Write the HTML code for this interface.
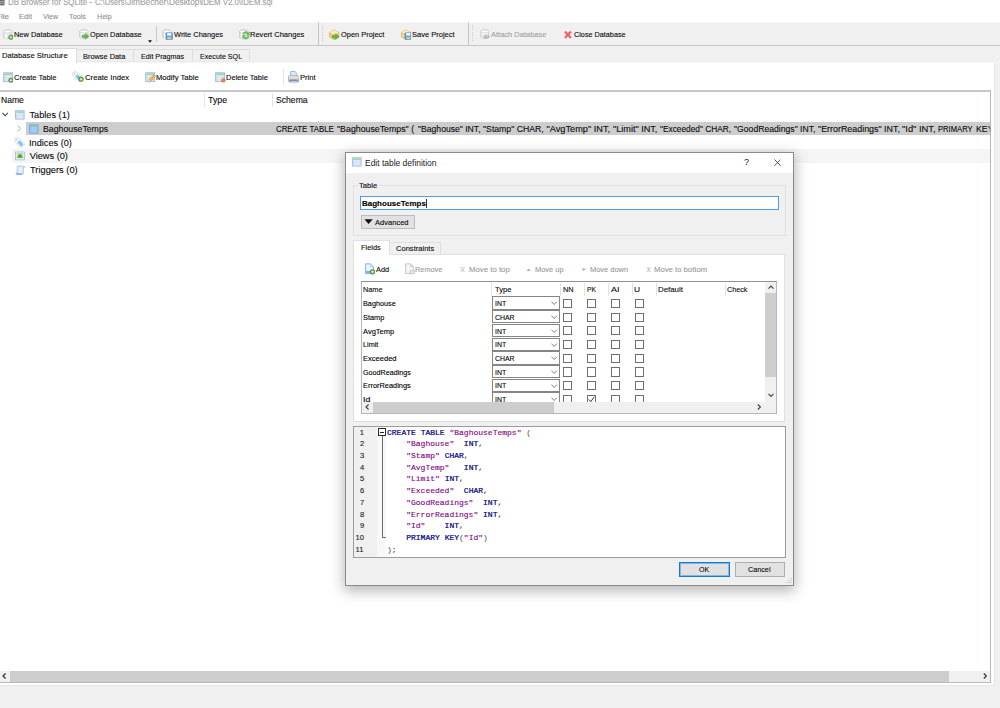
<!DOCTYPE html>
<html>
<head>
<meta charset="utf-8">
<title>DB Browser for SQLite</title>
<style>
html,body{margin:0;padding:0;}
body{width:1000px;height:708px;overflow:hidden;background:#fff;position:relative;font-family:"Liberation Sans",sans-serif;font-size:8px;color:#0c0c0c;}
.abs{position:absolute;}
.t{position:absolute;white-space:pre;line-height:12px;height:12px;transform-origin:0 50%;-webkit-text-stroke:.12px;}
.r{position:absolute;box-sizing:border-box;}
.combo{position:absolute;left:492.4px;width:67.9px;height:13.3px;box-sizing:border-box;border:1px solid #858585;background:#fff;}
.cb{position:absolute;width:9px;height:9.2px;box-sizing:border-box;border:1px solid #6e6e6e;background:#fff;}
.code{position:absolute;left:387px;white-space:pre;font-family:"Liberation Mono",monospace;font-size:8px;line-height:12px;height:12px;color:#222;}
.code .k{color:#00007f;font-weight:normal;-webkit-text-stroke:.22px #00007f;}
.code .s{color:#7f007f;-webkit-text-stroke:.12px #7f007f;}
.code .p{color:#3a3a6a;}
</style>
</head>
<body>
<!-- ===== main window chrome ===== -->
<svg class="abs" style="left:0;top:0" width="6" height="6" viewBox="0 0 6 6"><path d="M0 0h4.6v4.8c0 1-4.6 1-4.6 0z" fill="#6e6e6e"/><path d="M0 1.6h4.6M0 3.3h4.6" stroke="#d0d0d0" stroke-width=".6"/></svg>
<div class="r" style="left:0;top:22px;width:1000px;height:1px;background:#f8f8f8;"></div>
<div class="r" style="left:0;top:23px;width:1000px;height:22px;background:#f0f0f0;"></div>
<div class="r" style="left:0;top:45px;width:1000px;height:1px;background:#c6c6c6;"></div>
<div class="r" style="left:0;top:46px;width:1000px;height:17px;background:#f0f0f0;"></div>
<!-- toolbar separators / handles -->
<div class="r" style="left:156px;top:26.4px;width:1px;height:16px;background:#c9c9c9;"></div>
<div class="r" style="left:318px;top:22.4px;width:1px;height:22.4px;background:#c4c4c4;"></div>
<div class="r" style="left:322px;top:25px;width:1px;height:18px;background:repeating-linear-gradient(to bottom,#c9c9c9 0,#c9c9c9 1px,transparent 1px,transparent 2.2px);"></div>
<div class="r" style="left:468.2px;top:22.4px;width:1px;height:22.4px;background:#c4c4c4;"></div>
<div class="r" style="left:471.8px;top:25px;width:1px;height:18px;background:repeating-linear-gradient(to bottom,#c9c9c9 0,#c9c9c9 1px,transparent 1px,transparent 2.2px);"></div>
<svg class="abs" style="left:148.4px;top:39.6px" width="4" height="3" viewBox="0 0 4 3"><path d="M0 .3h4L2 2.7z" fill="#111"/></svg>
<!-- tabs -->
<div class="r" style="left:-1px;top:48px;width:78px;height:15px;background:#fff;border:1px solid #dcdcdc;border-bottom:none;"></div>
<div class="r" style="left:77px;top:49px;width:57px;height:13px;background:#f0f0f0;border:1px solid #dedede;border-left:none;border-bottom:1px solid #e9e9e9;"></div>
<div class="r" style="left:134px;top:49px;width:59px;height:13px;background:#f0f0f0;border:1px solid #dedede;border-left:none;border-bottom:1px solid #e9e9e9;"></div>
<div class="r" style="left:193px;top:49px;width:57px;height:13px;background:#f0f0f0;border:1px solid #dedede;border-left:none;border-bottom:1px solid #e9e9e9;"></div>
<div class="r" style="left:77px;top:62px;width:923px;height:1px;background:#f7f7f7;"></div>
<!-- pane -->
<div class="r" style="left:0;top:63px;width:995px;height:623px;background:#fff;border-right:1px solid #e6e6e6;border-bottom:1px solid #e6e6e6;"></div>
<div class="r" style="left:995px;top:63px;width:5px;height:645px;background:#f0f0f0;"></div>
<div class="r" style="left:0;top:686px;width:1000px;height:22px;background:#f0f0f0;"></div>
<div class="r" style="left:283px;top:69px;width:1px;height:16px;background:#e6e6e6;"></div>
<!-- tree frame -->
<div class="r" style="left:-1px;top:90.1px;width:992px;height:592.8px;border:1px solid #b3b9c2;border-top:2px solid #c6c7cc;background:#fff;"></div>
<div class="r" style="left:204.3px;top:93px;width:1px;height:14px;background:#e4e4e4;"></div>
<div class="r" style="left:272.3px;top:93px;width:1px;height:14px;background:#e4e4e4;"></div>
<div class="r" style="left:26px;top:121.6px;width:964px;height:13.6px;background:#cdcdcd;"></div>
<div class="r" style="left:12.2px;top:149.1px;width:977.8px;height:13.7px;background:#f5f5f5;"></div>
<svg class="abs" style="left:2px;top:112.2px" width="6.4" height="5" viewBox="0 0 6.4 5"><path d="M.5 .8L3.2 3.8 5.9 .8" fill="none" stroke="#3c3c3c" stroke-width="1.05"/></svg>
<svg class="abs" style="left:16.8px;top:125.4px" width="4.6" height="7" viewBox="0 0 4.6 7"><path d="M.8 .6L3.7 3.5 .8 6.4" fill="none" stroke="#9c9c9c" stroke-width=".9"/></svg>
<!-- bottom scrollbar -->
<div class="r" style="left:0;top:671px;width:990px;height:10.6px;background:#f0f0f0;"></div>
<div class="r" style="left:10.4px;top:671px;width:938.6px;height:10.6px;background:#cdcdcd;"></div>
<svg class="abs" style="left:2.2px;top:673.4px" width="4.4" height="6" viewBox="0 0 4.4 6"><path d="M3.6 .5L1 3 3.6 5.5" fill="none" stroke="#3a3a3a" stroke-width="1.3"/></svg>
<svg class="abs" style="left:982.8px;top:673.4px" width="4.4" height="6" viewBox="0 0 4.4 6"><path d="M.8 .5L3.4 3 .8 5.5" fill="none" stroke="#3a3a3a" stroke-width="1.3"/></svg>
<svg class="abs" style="left:2.6px;top:29px" width="10.6" height="10.6" viewBox="0 0 16 16"><path d="M1 3.8C1 .5 13.4 .5 13.4 3.8V12.2C13.4 15.5 1 15.5 1 12.2Z" fill="#ececec" stroke="#b9b9b9" stroke-width="1"/><path d="M4.4 5.6V14.4" stroke="#fafafa" stroke-width="2.6"/><ellipse cx="7.2" cy="3.8" rx="6.2" ry="2.4" fill="#fdfdfd" stroke="#c2c2c2" stroke-width=".9"/><circle cx="11.9" cy="12.5" r="3.4" fill="#52a131" stroke="#3c8420" stroke-width=".7"/><path d="M11.9 10.5v4M9.9 12.5h4" stroke="#fff" stroke-width="1.25"/></svg>
<svg class="abs" style="left:79px;top:29px" width="10.6" height="10.6" viewBox="0 0 16 16"><path d="M1 3.8C1 .5 13.4 .5 13.4 3.8V12.2C13.4 15.5 1 15.5 1 12.2Z" fill="#ececec" stroke="#b9b9b9" stroke-width="1"/><path d="M4.4 5.6V14.4" stroke="#fafafa" stroke-width="2.6"/><ellipse cx="7.2" cy="3.8" rx="6.2" ry="2.4" fill="#fdfdfd" stroke="#c2c2c2" stroke-width=".9"/><path d="M4.6 9.5h5V6.9l5.6 4.3-5.6 4.3v-2.6h-5z" fill="#5cba44" stroke="#3f9a2a" stroke-width=".6"/></svg>
<svg class="abs" style="left:162.2px;top:29px" width="10.8" height="10.8" viewBox="0 0 16 16"><path d="M1 3.8C1 .5 13.4 .5 13.4 3.8V12.2C13.4 15.5 1 15.5 1 12.2Z" fill="#ececec" stroke="#b9b9b9" stroke-width="1"/><path d="M4.4 5.6V14.4" stroke="#fafafa" stroke-width="2.6"/><ellipse cx="7.2" cy="3.8" rx="6.2" ry="2.4" fill="#fdfdfd" stroke="#c2c2c2" stroke-width=".9"/><rect x="5.8" y="5.6" width="9.8" height="9.8" rx=".8" fill="#5f95e6" stroke="#4479d0" stroke-width=".7"/><rect x="7.6" y="6" width="6.2" height="3.8" fill="#f6f9ff"/><rect x="7.8" y="11.6" width="5.8" height="3.4" fill="#b4dc78"/></svg>
<svg class="abs" style="left:239.4px;top:29px" width="10.8" height="10.8" viewBox="0 0 16 16"><path d="M1 3.8C1 .5 13.4 .5 13.4 3.8V12.2C13.4 15.5 1 15.5 1 12.2Z" fill="#ececec" stroke="#b9b9b9" stroke-width="1"/><path d="M4.4 5.6V14.4" stroke="#fafafa" stroke-width="2.6"/><ellipse cx="7.2" cy="3.8" rx="6.2" ry="2.4" fill="#fdfdfd" stroke="#c2c2c2" stroke-width=".9"/><g transform="translate(-2.6 -2.4) scale(1.16)"><path d="M7 8.2a4.2 4.2 0 0 1 7.4-1.3l1.3-1v4.2h-4.2l1.5-1.6a2.4 2.4 0 0 0-4.2.4z" fill="#6cc256" stroke="#4da53a" stroke-width=".4"/><path d="M15.4 12a4.2 4.2 0 0 1-7.4 1.3l-1.3 1v-4.2h4.2l-1.5 1.6a2.4 2.4 0 0 0 4.2-.4z" fill="#6cc256" stroke="#4da53a" stroke-width=".4"/></g></svg>
<svg class="abs" style="left:328.8px;top:29px" width="10.9" height="10.9" viewBox="0 0 16 16"><path d="M1 5.2L7.6 1.4 14.2 5.2V12L7.6 15.4 1 12z" fill="#f5d98a" stroke="#c79a34" stroke-width=".9"/><path d="M1 5.2l6.6 3.4 6.6-3.4M7.6 8.6v6.8" fill="none" stroke="#c79a34" stroke-width=".8"/><path d="M1 5.2L7.6 1.4 14.2 5.2 7.6 8.6z" fill="#fbeec0"/><path d="M4.6 9.5h5V6.9l5.6 4.3-5.6 4.3v-2.6h-5z" fill="#5cba44" stroke="#3f9a2a" stroke-width=".6"/></svg>
<svg class="abs" style="left:400.5px;top:29px" width="10.8" height="10.8" viewBox="0 0 16 16"><path d="M1 5.2L7.6 1.4 14.2 5.2V12L7.6 15.4 1 12z" fill="#f5d98a" stroke="#c79a34" stroke-width=".9"/><path d="M1 5.2l6.6 3.4 6.6-3.4M7.6 8.6v6.8" fill="none" stroke="#c79a34" stroke-width=".8"/><path d="M1 5.2L7.6 1.4 14.2 5.2 7.6 8.6z" fill="#fbeec0"/><rect x="5.8" y="5.6" width="9.8" height="9.8" rx=".8" fill="#5f95e6" stroke="#4479d0" stroke-width=".7"/><rect x="7.6" y="6" width="6.2" height="3.8" fill="#f6f9ff"/><rect x="7.8" y="11.6" width="5.8" height="3.4" fill="#b4dc78"/></svg>
<svg class="abs" style="left:479.6px;top:29.4px" width="10.2" height="10.2" viewBox="0 0 16 16"><g opacity=".85"><path d="M1 3.8C1 .5 13.4 .5 13.4 3.8V12.2C13.4 15.5 1 15.5 1 12.2Z" fill="#ececec" stroke="#b9b9b9" stroke-width="1"/><path d="M4.4 5.6V14.4" stroke="#fafafa" stroke-width="2.6"/><ellipse cx="7.2" cy="3.8" rx="6.2" ry="2.4" fill="#fdfdfd" stroke="#c2c2c2" stroke-width=".9"/><rect x="5" y="10.5" width="5" height="3.6" rx="1.8" fill="none" stroke="#8c8c8c" stroke-width="1.2"/><rect x="9" y="10.5" width="5" height="3.6" rx="1.8" fill="none" stroke="#8c8c8c" stroke-width="1.2"/></g></svg>
<svg class="abs" style="left:563px;top:29.6px" width="9.8" height="9.8" viewBox="0 0 16 16"><path d="M2.2 3.8L4.3 1.6 8 5.4 11.7 1.6 13.8 3.8 10.2 7.6 13.8 11.6 11.7 13.8 8 10 4.3 13.8 2.2 11.6 5.8 7.6z" fill="#f25a64" stroke="#e24752" stroke-width=".4"/></svg>
<svg class="abs" style="left:2.6px;top:72px" width="10.6" height="10.6" viewBox="0 0 16 16"><rect x="1" y="1.2" width="13.6" height="13.4" rx="0" fill="#cbddf6" stroke="#8fb3ea" stroke-width="1.2"/><rect x="2.2" y="2.4" width="11.2" height="2" fill="#9dd596"/><path d="M2 6.2h11.6M2 9.4h11.6M2 12.4h11.6M6 5v9M10 5v9" stroke="#f4f8fe" stroke-width=".75"/><circle cx="11.9" cy="12.5" r="3.4" fill="#52a131" stroke="#3c8420" stroke-width=".7"/><path d="M11.9 10.5v4M9.9 12.5h4" stroke="#fff" stroke-width="1.25"/></svg>
<svg class="abs" style="left:72.4px;top:71.4px" width="11.4" height="11.4" viewBox="0 0 16 16"><g transform="rotate(45 7.5 7.5)"><path d="M-.8 7.5L2 3.8h12.8v7.4H2z" fill="#fafbfd" stroke="#c3cad5" stroke-width=".9"/><rect x="5.6" y="5.3" width="7.8" height="4.4" fill="#79c4fa"/><circle cx="2.4" cy="7.5" r=".8" fill="#a8b0bc"/></g><g transform="translate(.8 -1)"><circle cx="11.9" cy="12.5" r="3.4" fill="#52a131" stroke="#3c8420" stroke-width=".7"/><path d="M11.9 10.5v4M9.9 12.5h4" stroke="#fff" stroke-width="1.25"/></g></svg>
<svg class="abs" style="left:145.4px;top:72px" width="10.6" height="10.6" viewBox="0 0 16 16"><rect x="1" y="1.2" width="13.6" height="13.4" rx="0" fill="#cbddf6" stroke="#8fb3ea" stroke-width="1.2"/><rect x="2.2" y="2.4" width="11.2" height="2" fill="#9dd596"/><path d="M2 6.2h11.6M2 9.4h11.6M2 12.4h11.6M6 5v9M10 5v9" stroke="#f4f8fe" stroke-width=".75"/><path d="M5 15l1-3.6L13.2 4.2l2.6 2.6L8.6 14z" fill="#f2b24a" stroke="#c98222" stroke-width=".7"/><path d="M5 15l1-3.6 2.6 2.6z" fill="#f6e3bd"/></svg>
<svg class="abs" style="left:215.2px;top:72px" width="10.6" height="10.6" viewBox="0 0 16 16"><rect x="1" y="1.2" width="13.6" height="13.4" rx="0" fill="#cbddf6" stroke="#8fb3ea" stroke-width="1.2"/><rect x="2.2" y="2.4" width="11.2" height="2" fill="#9dd596"/><path d="M2 6.2h11.6M2 9.4h11.6M2 12.4h11.6M6 5v9M10 5v9" stroke="#f4f8fe" stroke-width=".75"/><circle cx="12.6" cy="12.6" r="2.9" fill="#f4823a" stroke="#d9601c" stroke-width=".6"/></svg>
<svg class="abs" style="left:287.8px;top:70.6px" width="11.4" height="12.4" viewBox="0 0 16 17.4"><defs><linearGradient id="pg" x1="0" y1="0" x2="0" y2="1"><stop offset="0" stop-color="#f4f4f4"/><stop offset=".55" stop-color="#d2d2d2"/><stop offset="1" stop-color="#9c9c9c"/></linearGradient></defs><path d="M3.4 7.4V1.7c0-.6.4-1 1-1h5.4l2.8 2.8v3.9z" fill="#d9e9fb" stroke="#7aa9e6" stroke-width="1.1"/><rect x=".5" y="6.8" width="15" height="8.4" rx="1.7" fill="url(#pg)" stroke="#909090" stroke-width=".9"/><path d="M2.8 12.9h10.4" stroke="#5a5a5a" stroke-width="1.2"/><rect x="3.4" y="14.2" width="9.2" height="2.6" rx=".8" fill="#cfe2f8" stroke="#8db4e6" stroke-width=".8"/></svg>
<svg class="abs" style="left:15px;top:110px" width="10" height="10" viewBox="0 0 16 16"><rect x="1" y="1.2" width="13.6" height="13.4" rx="0" fill="#cbddf6" stroke="#8fb3ea" stroke-width="1.2"/><rect x="2.2" y="2.4" width="11.2" height="2" fill="#9dd596"/><path d="M2 6.2h11.6M2 9.4h11.6M2 12.4h11.6M6 5v9M10 5v9" stroke="#f4f8fe" stroke-width=".75"/></svg>
<svg class="abs" style="left:28.8px;top:123.6px" width="10" height="10" viewBox="0 0 16 16"><rect x="1" y="1.2" width="13.6" height="13.4" rx="0" fill="#8fc0f2" stroke="#6aa6ea" stroke-width="1.2"/><rect x="2.2" y="2.6" width="11.2" height="1.8" fill="#7fd08a"/><path d="M2 6.4h11.6M2 9.4h11.6M2 12.4h11.6M6 5v9M10 5v9" stroke="#b9dbfa" stroke-width=".9"/></svg>
<svg class="abs" style="left:14px;top:136.8px" width="11.4" height="11.4" viewBox="0 0 16 16"><g transform="rotate(45 7.5 7.5)"><path d="M-.8 7.5L2 3.8h12.8v7.4H2z" fill="#fafbfd" stroke="#c3cad5" stroke-width=".9"/><rect x="5.6" y="5.3" width="7.8" height="4.4" fill="#79c4fa"/><circle cx="2.4" cy="7.5" r=".8" fill="#a8b0bc"/></g></svg>
<svg class="abs" style="left:15px;top:151.2px" width="10" height="10" viewBox="0 0 16 16"><rect x="1" y="1.6" width="14" height="12.6" fill="#f1f6fd" stroke="#8fb0dc" stroke-width="1.1"/><rect x="2.8" y="3.4" width="10.4" height="7.6" fill="#b9dba0"/><path d="M4.6 10.6c.4-3 1.6-5.6 3.4-5.6s3 2.6 3.4 5.6z" fill="#4f9a38"/><rect x="2.8" y="10" width="10.4" height="1.4" fill="#6fb24e"/></svg>
<svg class="abs" style="left:14.8px;top:164.8px" width="10.4" height="10.4" viewBox="0 0 16 16"><path d="M4.4 1.8h9.4c1.4 0 1.4 2.2 0 2.2h-1v8.6c0 1.6-1 2.2-2.2 2.2H2.4c-1.6 0-1.6-2.4 0-2.4h1V3.6c0-1 .4-1.8 1-1.8z" fill="#e4f0fc" stroke="#86aee0" stroke-width="1"/><path d="M2.2 13.6h8.6" stroke="#5f92d2" stroke-width="1.4"/></svg>

<!-- ===== dialog ===== -->
<div class="r" style="left:345px;top:151.8px;width:449px;height:434px;background:#f0f0f0;border:1px solid #8a8a8a;box-shadow:0 4px 13px 1px rgba(0,0,0,.29);"></div>
<div class="r" style="left:346px;top:152.8px;width:447px;height:19.9px;background:#fff;"></div>
<svg class="abs" style="left:774.1px;top:158.5px" width="7.2" height="7.2" viewBox="0 0 8 8"><path d="M.5 .5l7 7M7.5 .5l-7 7" stroke="#1f1f1f" stroke-width=".85" fill="none"/></svg>
<!-- group box -->
<div class="r" style="left:353.2px;top:185.2px;width:432.8px;height:50.6px;border:1px solid #e0e0e0;"></div>
<div class="r" style="left:357.6px;top:182px;width:21px;height:8px;background:#f0f0f0;"></div>
<div class="r" style="left:359.6px;top:195.8px;width:419.4px;height:14.4px;background:#fff;border:1px solid #4f9ce3;"></div>
<div class="r" style="left:425.9px;top:199.2px;width:.8px;height:8.6px;background:#333;"></div>
<div class="r" style="left:361px;top:215px;width:54.2px;height:13.6px;background:#e1e1e1;border:1px solid #bcbcbc;"></div>
<svg class="abs" style="left:364.2px;top:219.2px" width="9.2" height="5.2" viewBox="0 0 8.4 5"><path d="M.2 .2h8L4.2 4.8z" fill="#111"/></svg>
<!-- tab widget -->
<div class="r" style="left:353.2px;top:254px;width:432px;height:167.6px;background:#fff;border:1px solid #dfdfdf;"></div>
<div class="r" style="left:389.4px;top:241.8px;width:52px;height:12.4px;background:#f0f0f0;border:1px solid #dfdfdf;border-left:none;border-bottom:none;"></div>
<div class="r" style="left:353.2px;top:240.2px;width:36.4px;height:14.8px;background:#fff;border:1px solid #dfdfdf;border-bottom:none;"></div>
<!-- field table -->
<div class="r" style="left:360.8px;top:281px;width:416.4px;height:132.6px;background:#fff;border:1px solid #b2b8c2;border-top-color:#8c929c;"></div>
<div class="r" style="left:491.4px;top:283px;width:1px;height:12.6px;background:#e2e2e2;"></div>
<div class="r" style="left:560.4px;top:283px;width:1px;height:12.6px;background:#e2e2e2;"></div>
<div class="r" style="left:584.2px;top:283px;width:1px;height:12.6px;background:#e2e2e2;"></div>
<div class="r" style="left:608.2px;top:283px;width:1px;height:12.6px;background:#e2e2e2;"></div>
<div class="r" style="left:632px;top:283px;width:1px;height:12.6px;background:#e2e2e2;"></div>
<div class="r" style="left:656px;top:283px;width:1px;height:12.6px;background:#e2e2e2;"></div>
<div class="r" style="left:725px;top:283px;width:1px;height:12.6px;background:#e2e2e2;"></div>
<div class="abs" style="left:361.8px;top:296px;width:403.6px;height:105.6px;overflow:hidden;"><div class="abs" style="left:-361.8px;top:-296px;">
<div class="combo" style="top:296.40px"></div>
<svg class="abs" style="left:551.2px;top:301.40px" width="6.4" height="4.4" viewBox="0 0 6.4 4.4"><path d="M.4 .6L3.2 3.5 6 .6" fill="none" stroke="#666" stroke-width=".85"/></svg>
<div class="cb" style="left:563px;top:298.80px"></div>
<div class="cb" style="left:587px;top:298.80px"></div>
<div class="cb" style="left:611px;top:298.80px"></div>
<div class="cb" style="left:635px;top:298.80px"></div>
<div class="combo" style="top:310.12px"></div>
<svg class="abs" style="left:551.2px;top:315.12px" width="6.4" height="4.4" viewBox="0 0 6.4 4.4"><path d="M.4 .6L3.2 3.5 6 .6" fill="none" stroke="#666" stroke-width=".85"/></svg>
<div class="cb" style="left:563px;top:312.52px"></div>
<div class="cb" style="left:587px;top:312.52px"></div>
<div class="cb" style="left:611px;top:312.52px"></div>
<div class="cb" style="left:635px;top:312.52px"></div>
<div class="combo" style="top:323.84px"></div>
<svg class="abs" style="left:551.2px;top:328.84px" width="6.4" height="4.4" viewBox="0 0 6.4 4.4"><path d="M.4 .6L3.2 3.5 6 .6" fill="none" stroke="#666" stroke-width=".85"/></svg>
<div class="cb" style="left:563px;top:326.24px"></div>
<div class="cb" style="left:587px;top:326.24px"></div>
<div class="cb" style="left:611px;top:326.24px"></div>
<div class="cb" style="left:635px;top:326.24px"></div>
<div class="combo" style="top:337.56px"></div>
<svg class="abs" style="left:551.2px;top:342.56px" width="6.4" height="4.4" viewBox="0 0 6.4 4.4"><path d="M.4 .6L3.2 3.5 6 .6" fill="none" stroke="#666" stroke-width=".85"/></svg>
<div class="cb" style="left:563px;top:339.96px"></div>
<div class="cb" style="left:587px;top:339.96px"></div>
<div class="cb" style="left:611px;top:339.96px"></div>
<div class="cb" style="left:635px;top:339.96px"></div>
<div class="combo" style="top:351.28px"></div>
<svg class="abs" style="left:551.2px;top:356.28px" width="6.4" height="4.4" viewBox="0 0 6.4 4.4"><path d="M.4 .6L3.2 3.5 6 .6" fill="none" stroke="#666" stroke-width=".85"/></svg>
<div class="cb" style="left:563px;top:353.68px"></div>
<div class="cb" style="left:587px;top:353.68px"></div>
<div class="cb" style="left:611px;top:353.68px"></div>
<div class="cb" style="left:635px;top:353.68px"></div>
<div class="combo" style="top:365.00px"></div>
<svg class="abs" style="left:551.2px;top:370.00px" width="6.4" height="4.4" viewBox="0 0 6.4 4.4"><path d="M.4 .6L3.2 3.5 6 .6" fill="none" stroke="#666" stroke-width=".85"/></svg>
<div class="cb" style="left:563px;top:367.40px"></div>
<div class="cb" style="left:587px;top:367.40px"></div>
<div class="cb" style="left:611px;top:367.40px"></div>
<div class="cb" style="left:635px;top:367.40px"></div>
<div class="combo" style="top:378.72px"></div>
<svg class="abs" style="left:551.2px;top:383.72px" width="6.4" height="4.4" viewBox="0 0 6.4 4.4"><path d="M.4 .6L3.2 3.5 6 .6" fill="none" stroke="#666" stroke-width=".85"/></svg>
<div class="cb" style="left:563px;top:381.12px"></div>
<div class="cb" style="left:587px;top:381.12px"></div>
<div class="cb" style="left:611px;top:381.12px"></div>
<div class="cb" style="left:635px;top:381.12px"></div>
<div class="combo" style="top:392.44px"></div>
<svg class="abs" style="left:551.2px;top:397.44px" width="6.4" height="4.4" viewBox="0 0 6.4 4.4"><path d="M.4 .6L3.2 3.5 6 .6" fill="none" stroke="#666" stroke-width=".85"/></svg>
<div class="cb" style="left:563px;top:394.84px"></div>
<div class="cb" style="left:587px;top:394.84px"></div>
<div class="cb" style="left:611px;top:394.84px"></div>
<div class="cb" style="left:635px;top:394.84px"></div>
<svg class="abs" style="left:588px;top:395.84px" width="7" height="7" viewBox="0 0 7 7"><path d="M.8 3.4L2.8 5.6 6.4 .8" fill="none" stroke="#333" stroke-width="1"/></svg>
<div class="t" style="left:362.95px;top:298.10px;font-size:8px;color:#000;transform:scaleX(0.9078);">Baghouse</div>
<div class="t" style="left:494.75px;top:298.10px;font-size:8px;color:#000;transform:scaleX(0.8667);">INT</div>
<div class="t" style="left:362.94px;top:311.82px;font-size:8px;color:#000;transform:scaleX(0.9213);">Stamp</div>
<div class="t" style="left:495.18px;top:311.82px;font-size:8px;color:#000;transform:scaleX(0.8636);">CHAR</div>
<div class="t" style="left:363.40px;top:325.54px;font-size:8px;color:#000;transform:scaleX(0.9394);">AvgTemp</div>
<div class="t" style="left:494.75px;top:325.54px;font-size:8px;color:#000;transform:scaleX(0.8667);">INT</div>
<div class="t" style="left:362.95px;top:339.26px;font-size:8px;color:#000;transform:scaleX(0.9091);">Limit</div>
<div class="t" style="left:494.75px;top:339.26px;font-size:8px;color:#000;transform:scaleX(0.8667);">INT</div>
<div class="t" style="left:362.93px;top:352.98px;font-size:8px;color:#000;transform:scaleX(0.9420);">Exceeded</div>
<div class="t" style="left:495.18px;top:352.98px;font-size:8px;color:#000;transform:scaleX(0.8636);">CHAR</div>
<div class="t" style="left:363.18px;top:366.70px;font-size:8px;color:#000;transform:scaleX(0.8962);">GoodReadings</div>
<div class="t" style="left:494.75px;top:366.70px;font-size:8px;color:#000;transform:scaleX(0.8667);">INT</div>
<div class="t" style="left:362.94px;top:380.42px;font-size:8px;color:#000;transform:scaleX(0.9261);">ErrorReadings</div>
<div class="t" style="left:494.75px;top:380.42px;font-size:8px;color:#000;transform:scaleX(0.8667);">INT</div>
<div class="t" style="left:362.58px;top:394.14px;font-size:8px;color:#000;transform:scaleX(1.0909);">Id</div>
<div class="t" style="left:494.75px;top:394.14px;font-size:8px;color:#000;transform:scaleX(0.8667);">INT</div>
</div></div>
<!-- table scrollbars -->
<div class="r" style="left:765.4px;top:282px;width:10.8px;height:130.6px;background:#f0f0f0;"></div>
<div class="r" style="left:765.4px;top:293.2px;width:10.8px;height:84px;background:#cdcdcd;"></div>
<svg class="abs" style="left:767.8px;top:285.4px" width="6" height="4.4" viewBox="0 0 6 4.4"><path d="M.5 3.6L3 1 5.5 3.6" fill="none" stroke="#444" stroke-width="1.15"/></svg>
<svg class="abs" style="left:767.8px;top:393.2px" width="6" height="4.4" viewBox="0 0 6 4.4"><path d="M.5 .8L3 3.4 5.5 .8" fill="none" stroke="#444" stroke-width="1.15"/></svg>
<div class="r" style="left:361.8px;top:401.8px;width:403.6px;height:10.8px;background:#f0f0f0;"></div>
<div class="r" style="left:373.4px;top:401.8px;width:180.6px;height:10.8px;background:#cdcdcd;"></div>
<svg class="abs" style="left:364.8px;top:404.2px" width="4.4" height="6" viewBox="0 0 4.4 6"><path d="M3.6 .5L1 3 3.6 5.5" fill="none" stroke="#444" stroke-width="1.15"/></svg>
<svg class="abs" style="left:757.2px;top:404.2px" width="4.4" height="6" viewBox="0 0 4.4 6"><path d="M.8 .5L3.4 3 .8 5.5" fill="none" stroke="#444" stroke-width="1.15"/></svg>
<!-- sql editor -->
<div class="r" style="left:353px;top:425.6px;width:433px;height:132px;background:#fff;border:1px solid #9c9c9c;"></div>
<div class="r" style="left:354px;top:426.6px;width:23.4px;height:130px;background:#f0f0f0;"></div>
<div class="r" style="left:377.4px;top:426.6px;width:9px;height:130px;background:#f8f8f8;"></div>
<div class="r" style="left:381.7px;top:436px;width:1px;height:101.6px;background:#6c6c6c;"></div>
<div class="r" style="left:381.7px;top:536.8px;width:4.6px;height:1px;background:#6c6c6c;"></div>
<div class="r" style="left:378.2px;top:428.4px;width:8.2px;height:8px;background:#fff;border:1px solid #2a2a2a;"></div>
<div class="r" style="left:380.2px;top:432px;width:4.2px;height:1px;background:#222;"></div>
<div class="code" style="top:426.60px"><b class="k">CREATE</b> <b class="k">TABLE</b> <span class="s">"BaghouseTemps"</span> <span class="p">(</span></div>
<div class="code" style="top:438.30px">    <span class="s">"Baghouse"</span>  <b class="k">INT</b>,</div>
<div class="code" style="top:450.00px">    <span class="s">"Stamp"</span> <b class="k">CHAR</b>,</div>
<div class="code" style="top:461.70px">    <span class="s">"AvgTemp"</span>   <b class="k">INT</b>,</div>
<div class="code" style="top:473.40px">    <span class="s">"Limit"</span> <b class="k">INT</b>,</div>
<div class="code" style="top:485.10px">    <span class="s">"Exceeded"</span>  <b class="k">CHAR</b>,</div>
<div class="code" style="top:496.80px">    <span class="s">"GoodReadings"</span>  <b class="k">INT</b>,</div>
<div class="code" style="top:508.50px">    <span class="s">"ErrorReadings"</span> <b class="k">INT</b>,</div>
<div class="code" style="top:520.20px">    <span class="s">"Id"</span>    <b class="k">INT</b>,</div>
<div class="code" style="top:531.90px">    <b class="k">PRIMARY</b> <b class="k">KEY</b><span class="p">(</span><span class="s">"Id"</span><span class="p">)</span></div>
<div class="code" style="top:543.60px"><span class="p">)</span>;</div>
<!-- buttons -->
<div class="r" style="left:679.4px;top:562.3px;width:50.4px;height:14.6px;background:#e1e1e1;border:1px solid #0f7ad8;box-shadow:inset 0 0 0 1px rgba(0,120,215,.4);"></div>
<div class="r" style="left:735px;top:562.3px;width:50px;height:14.6px;background:#e1e1e1;border:1px solid #adadad;"></div>
<svg class="abs" style="left:786px;top:578px" width="6" height="6" viewBox="0 0 6 6"><g fill="#b8b8b8"><rect x="4.4" y="0" width="1" height="1"/><rect x="2.4" y="2" width="1" height="1"/><rect x="4.4" y="2" width="1" height="1"/><rect x=".4" y="4" width="1" height="1"/><rect x="2.4" y="4" width="1" height="1"/><rect x="4.4" y="4" width="1" height="1"/></g></svg>
<svg class="abs" style="left:352px;top:157.2px" width="10" height="10" viewBox="0 0 16 16"><rect x="1" y="1.2" width="13.6" height="13.4" rx="0" fill="#cbddf6" stroke="#8fb3ea" stroke-width="1.2"/><rect x="2.2" y="2.4" width="11.2" height="2" fill="#9dd596"/><path d="M2 6.2h11.6M2 9.4h11.6M2 12.4h11.6M6 5v9M10 5v9" stroke="#f4f8fe" stroke-width=".75"/></svg>
<svg class="abs" style="left:364px;top:263.4px" width="11.4" height="11.4" viewBox="0 0 16 16"><path d="M2 1.2h7.4l3.8 3.8v9.8H2z" fill="#e9f2fd" stroke="#79a6e4" stroke-width="1.2"/><path d="M9.4 1.2v3.8h3.8" fill="#d4e5f9" stroke="#8db4e6" stroke-width=".8"/><rect x="2.6" y="11" width="8" height="3.4" fill="#7fb3ef"/><circle cx="11.9" cy="12.5" r="3.4" fill="#52a131" stroke="#3c8420" stroke-width=".7"/><path d="M11.9 10.5v4M9.9 12.5h4" stroke="#fff" stroke-width="1.25"/></svg>
<svg class="abs" style="left:403.8px;top:263.4px" width="11.4" height="11.4" viewBox="0 0 16 16"><path d="M2 1.2h7.4l3.8 3.8v9.8H2z" fill="#f4f4f4" stroke="#b5b5b5" stroke-width="1"/><path d="M9.4 1.2v3.8h3.8" fill="#e2e2e2" stroke="#b5b5b5" stroke-width=".8"/><rect x="8.4" y="10.6" width="6.6" height="4.4" rx="1" fill="#dadada" stroke="#b0b0b0" stroke-width=".6"/><path d="M9.8 12.8h3.8" stroke="#fff" stroke-width="1.1"/></svg>
<svg class="abs" style="left:459.6px;top:267px" width="5.4" height="5" viewBox="0 0 5.4 5"><path d="M.3 .9h4.8" stroke="#b4b4b4" stroke-width=".8"/><path d="M1 3.4L2.7 1.7 4.4 3.4z" fill="#b0b0b0"/><path d="M.3 4.1h4.8" stroke="#c4c4c4" stroke-width=".7"/></svg>
<svg class="abs" style="left:526.2px;top:267px" width="5.4" height="5" viewBox="0 0 5.4 5"><path d="M.5 3.9L2.7 1.4 4.9 3.9z" fill="#b0b0b0"/></svg>
<svg class="abs" style="left:581px;top:267px" width="5.4" height="5" viewBox="0 0 5.4 5"><path d="M.5 1.4L2.7 3.9 4.9 1.4z" fill="#b0b0b0"/></svg>
<svg class="abs" style="left:645.6px;top:267px" width="5.4" height="5" viewBox="0 0 5.4 5"><path d="M.3 4.1h4.8" stroke="#b4b4b4" stroke-width=".8"/><path d="M1 1.6L2.7 3.3 4.4 1.6z" fill="#b0b0b0"/><path d="M.3 .9h4.8" stroke="#c4c4c4" stroke-width=".7"/></svg>

<!-- ===== all text ===== -->
<div class="t" style="left:8.08px;top:-4.40px;font-size:8.8px;color:#a0a0a0;transform:scaleX(0.8885);">DB Browser for SQLite -</div>
<div class="t" style="left:95.17px;top:-4.40px;font-size:8.8px;color:#a0a0a0;transform:scaleX(0.8607);">C:\Users\</div>
<div class="t" style="left:127.16px;top:-4.40px;font-size:8.8px;color:#a0a0a0;transform:scaleX(0.9463);">JimBecher\</div>
<div class="t" style="left:168.69px;top:-4.40px;font-size:8.8px;color:#a0a0a0;transform:scaleX(0.9412);">Desktop\</div>
<div class="t" style="left:201.33px;top:-4.40px;font-size:8.8px;color:#a0a0a0;transform:scaleX(0.8904);">IDEM V2.0\</div>
<div class="t" style="left:241.34px;top:-4.40px;font-size:8.8px;color:#a0a0a0;transform:scaleX(0.8812);">IDEM.sql</div>
<div class="t" style="left:-3.71px;top:11.20px;font-size:8px;color:#8f8f8f;transform:scaleX(1.0167);">File</div>
<div class="t" style="left:18.93px;top:11.20px;font-size:8px;color:#8f8f8f;transform:scaleX(0.9434);">Edit</div>
<div class="t" style="left:43.00px;top:11.20px;font-size:8px;color:#8f8f8f;transform:scaleX(0.8696);">View</div>
<div class="t" style="left:69.17px;top:11.20px;font-size:8px;color:#8f8f8f;transform:scaleX(0.9096);">Tools</div>
<div class="t" style="left:96.56px;top:11.20px;font-size:8px;color:#8f8f8f;transform:scaleX(0.8889);">Help</div>
<div class="t" style="left:13.54px;top:29.00px;font-size:8px;color:#0c0c0c;transform:scaleX(0.9275);">New Database</div>
<div class="t" style="left:90.17px;top:29.00px;font-size:8px;color:#0c0c0c;transform:scaleX(0.9225);">Open Database</div>
<div class="t" style="left:174.00px;top:29.00px;font-size:8px;color:#0c0c0c;transform:scaleX(0.9295);">Write Changes</div>
<div class="t" style="left:250.33px;top:29.00px;font-size:8px;color:#0c0c0c;transform:scaleX(0.9404);">Revert Changes</div>
<div class="t" style="left:340.57px;top:29.00px;font-size:8px;color:#0c0c0c;transform:scaleX(0.9290);">Open Project</div>
<div class="t" style="left:411.53px;top:29.00px;font-size:8px;color:#0c0c0c;transform:scaleX(0.9385);">Save Project</div>
<div class="t" style="left:490.60px;top:29.00px;font-size:8px;color:#a3a3a3;transform:scaleX(0.9362);">Attach Database</div>
<div class="t" style="left:573.77px;top:29.00px;font-size:8px;color:#0c0c0c;transform:scaleX(0.9062);">Close Database</div>
<div class="t" style="left:1.52px;top:49.60px;font-size:8px;color:#0c0c0c;transform:scaleX(0.9524);">Database Structure</div>
<div class="t" style="left:82.54px;top:50.60px;font-size:8px;color:#0c0c0c;transform:scaleX(0.9231);">Browse Data</div>
<div class="t" style="left:141.15px;top:50.60px;font-size:8px;color:#0c0c0c;transform:scaleX(0.8974);">Edit Pragmas</div>
<div class="t" style="left:200.45px;top:50.60px;font-size:8px;color:#0c0c0c;transform:scaleX(0.8946);">Execute SQL</div>
<div class="t" style="left:13.77px;top:71.70px;font-size:8px;color:#0c0c0c;transform:scaleX(0.9385);">Create Table</div>
<div class="t" style="left:84.66px;top:71.70px;font-size:8px;color:#0c0c0c;transform:scaleX(0.9626);">Create Index</div>
<div class="t" style="left:156.42px;top:71.70px;font-size:8px;color:#0c0c0c;transform:scaleX(0.9523);">Modify Table</div>
<div class="t" style="left:226.43px;top:71.70px;font-size:8px;color:#0c0c0c;transform:scaleX(0.9448);">Delete Table</div>
<div class="t" style="left:299.52px;top:71.70px;font-size:8px;color:#0c0c0c;transform:scaleX(0.9500);">Print</div>
<div class="t" style="left:1.30px;top:94.00px;font-size:9.2px;color:#0c0c0c;transform:scaleX(0.9319);">Name</div>
<div class="t" style="left:207.76px;top:94.00px;font-size:9.2px;color:#0c0c0c;transform:scaleX(0.9558);">Type</div>
<div class="t" style="left:275.53px;top:94.00px;font-size:9.2px;color:#0c0c0c;transform:scaleX(0.9383);">Schema</div>
<div class="t" style="left:29.50px;top:109.00px;font-size:9.2px;color:#0c0c0c;">Tables (1)</div>
<div class="t" style="left:42.79px;top:122.75px;font-size:9.2px;color:#0c0c0c;transform:scaleX(0.9519);">BaghouseTemps</div>
<div class="t" style="left:29.00px;top:136.50px;font-size:9.2px;color:#0c0c0c;">Indices (0)</div>
<div class="t" style="left:29.75px;top:150.25px;font-size:9.2px;color:#0c0c0c;">Views (0)</div>
<div class="t" style="left:29.50px;top:164.00px;font-size:9.2px;color:#0c0c0c;transform:scaleX(1.0108);">Triggers (0)</div>
<div class="t" style="left:275.57px;top:122.75px;font-size:9.2px;color:#0c0c0c;transform:scaleX(0.8571);">CREATE TABLE</div>
<div class="t" style="left:337.26px;top:122.75px;font-size:9.2px;color:#0c0c0c;transform:scaleX(0.9570);">&quot;BaghouseTemps&quot; (</div>
<div class="t" style="left:417.77px;top:122.75px;font-size:9.2px;color:#0c0c0c;transform:scaleX(0.9361);">&quot;Baghouse&quot; INT,</div>
<div class="t" style="left:483.01px;top:122.75px;font-size:9.2px;color:#0c0c0c;transform:scaleX(0.9455);">&quot;Stamp&quot; CHAR,</div>
<div class="t" style="left:546.50px;top:122.75px;font-size:9.2px;color:#0c0c0c;">&quot;AvgTemp&quot; INT,</div>
<div class="t" style="left:612.75px;top:122.75px;font-size:9.2px;color:#0c0c0c;transform:scaleX(0.9897);">&quot;Limit&quot; INT,</div>
<div class="t" style="left:659.77px;top:122.75px;font-size:9.2px;color:#0c0c0c;transform:scaleX(0.9039);">&quot;Exceeded&quot; CHAR,</div>
<div class="t" style="left:733.52px;top:122.75px;font-size:9.2px;color:#0c0c0c;transform:scaleX(0.9394);">&quot;GoodReadings&quot; INT,</div>
<div class="t" style="left:817.76px;top:122.75px;font-size:9.2px;color:#0c0c0c;transform:scaleX(0.9677);">&quot;ErrorReadings&quot; INT,</div>
<div class="t" style="left:902.25px;top:122.75px;font-size:9.2px;color:#0c0c0c;transform:scaleX(1.0172);">&quot;Id&quot; INT,</div>
<div class="t" style="left:938.13px;top:122.75px;font-size:9.2px;color:#0c0c0c;transform:scaleX(0.8294);">PRIMARY</div>
<div class="t" style="left:975.54px;top:122.75px;font-size:9.2px;color:#0c0c0c;transform:scaleX(0.9486);width:15.30px;overflow:hidden;">KEY(&quot;Id&quot;) )</div>
<div class="t" style="left:364.99px;top:156.60px;font-size:8.9px;color:#1a1a1a;-webkit-text-stroke:0;transform:scaleX(0.9532);">Edit table definition</div>
<div class="t" style="left:744.34px;top:156.30px;font-size:8.8px;color:#1a1a1a;-webkit-text-stroke:0;transform:scaleX(1.0353);">?</div>
<div class="t" style="left:359.06px;top:179.60px;font-size:8px;color:#0c0c0c;transform:scaleX(0.9568);">Table</div>
<div class="t" style="left:362.00px;top:197.60px;font-size:8px;color:#000;font-weight:bold;">BaghouseTemps</div>
<div class="t" style="left:375.20px;top:216.70px;font-size:8px;color:#0c0c0c;transform:scaleX(0.9429);">Advanced</div>
<div class="t" style="left:360.54px;top:242.30px;font-size:8px;color:#0c0c0c;transform:scaleX(0.9268);">Fields</div>
<div class="t" style="left:395.96px;top:242.80px;font-size:8px;color:#0c0c0c;transform:scaleX(0.9450);">Constraints</div>
<div class="t" style="left:376.00px;top:264.20px;font-size:8px;color:#0c0c0c;transform:scaleX(0.9236);">Add</div>
<div class="t" style="left:414.94px;top:264.20px;font-size:8px;color:#9b9b9b;transform:scaleX(0.9172);">Remove</div>
<div class="t" style="left:468.51px;top:264.20px;font-size:8px;color:#9b9b9b;transform:scaleX(0.9756);">Move to top</div>
<div class="t" style="left:535.43px;top:264.20px;font-size:8px;color:#9b9b9b;transform:scaleX(0.9333);">Move up</div>
<div class="t" style="left:590.13px;top:264.20px;font-size:8px;color:#9b9b9b;transform:scaleX(0.9325);">Move down</div>
<div class="t" style="left:654.42px;top:264.20px;font-size:8px;color:#9b9b9b;transform:scaleX(0.9641);">Move to bottom</div>
<div class="t" style="left:363.44px;top:284.00px;font-size:8px;color:#0c0c0c;transform:scaleX(0.9122);">Name</div>
<div class="t" style="left:494.76px;top:284.00px;font-size:8px;color:#0c0c0c;transform:scaleX(0.9552);">Type</div>
<div class="t" style="left:562.54px;top:284.00px;font-size:8px;color:#0c0c0c;transform:scaleX(0.9238);">NN</div>
<div class="t" style="left:586.58px;top:284.00px;font-size:8px;color:#0c0c0c;transform:scaleX(0.8400);">PK</div>
<div class="t" style="left:611.00px;top:284.00px;font-size:8px;color:#0c0c0c;transform:scaleX(1.1259);">AI</div>
<div class="t" style="left:634.47px;top:284.00px;font-size:8px;color:#0c0c0c;transform:scaleX(1.0526);">U</div>
<div class="t" style="left:658.41px;top:284.00px;font-size:8px;color:#0c0c0c;transform:scaleX(0.9818);">Default</div>
<div class="t" style="left:727.47px;top:284.00px;font-size:8px;color:#0c0c0c;transform:scaleX(0.9022);">Check</div>
<div class="t" style="left:698.68px;top:564.00px;font-size:8px;color:#0c0c0c;transform:scaleX(0.8800);">OK</div>
<div class="t" style="left:748.27px;top:564.00px;font-size:8px;color:#0c0c0c;transform:scaleX(0.9031);">Cancel</div>
<div class="t" style="left:359.70px;top:426.60px;font-size:7.6px;color:#222;">1</div>
<div class="t" style="left:359.95px;top:438.30px;font-size:7.6px;color:#222;">2</div>
<div class="t" style="left:359.95px;top:450.00px;font-size:7.6px;color:#222;">3</div>
<div class="t" style="left:359.95px;top:461.70px;font-size:7.6px;color:#222;">4</div>
<div class="t" style="left:359.95px;top:473.40px;font-size:7.6px;color:#222;">5</div>
<div class="t" style="left:359.95px;top:485.10px;font-size:7.6px;color:#222;">6</div>
<div class="t" style="left:359.95px;top:496.80px;font-size:7.6px;color:#222;">7</div>
<div class="t" style="left:359.95px;top:508.50px;font-size:7.6px;color:#222;">8</div>
<div class="t" style="left:359.95px;top:520.20px;font-size:7.6px;color:#222;">9</div>
<div class="t" style="left:355.50px;top:531.90px;font-size:7.6px;color:#222;">10</div>
<div class="t" style="left:355.50px;top:543.60px;font-size:7.6px;color:#222;">11</div>
</body>
</html>
